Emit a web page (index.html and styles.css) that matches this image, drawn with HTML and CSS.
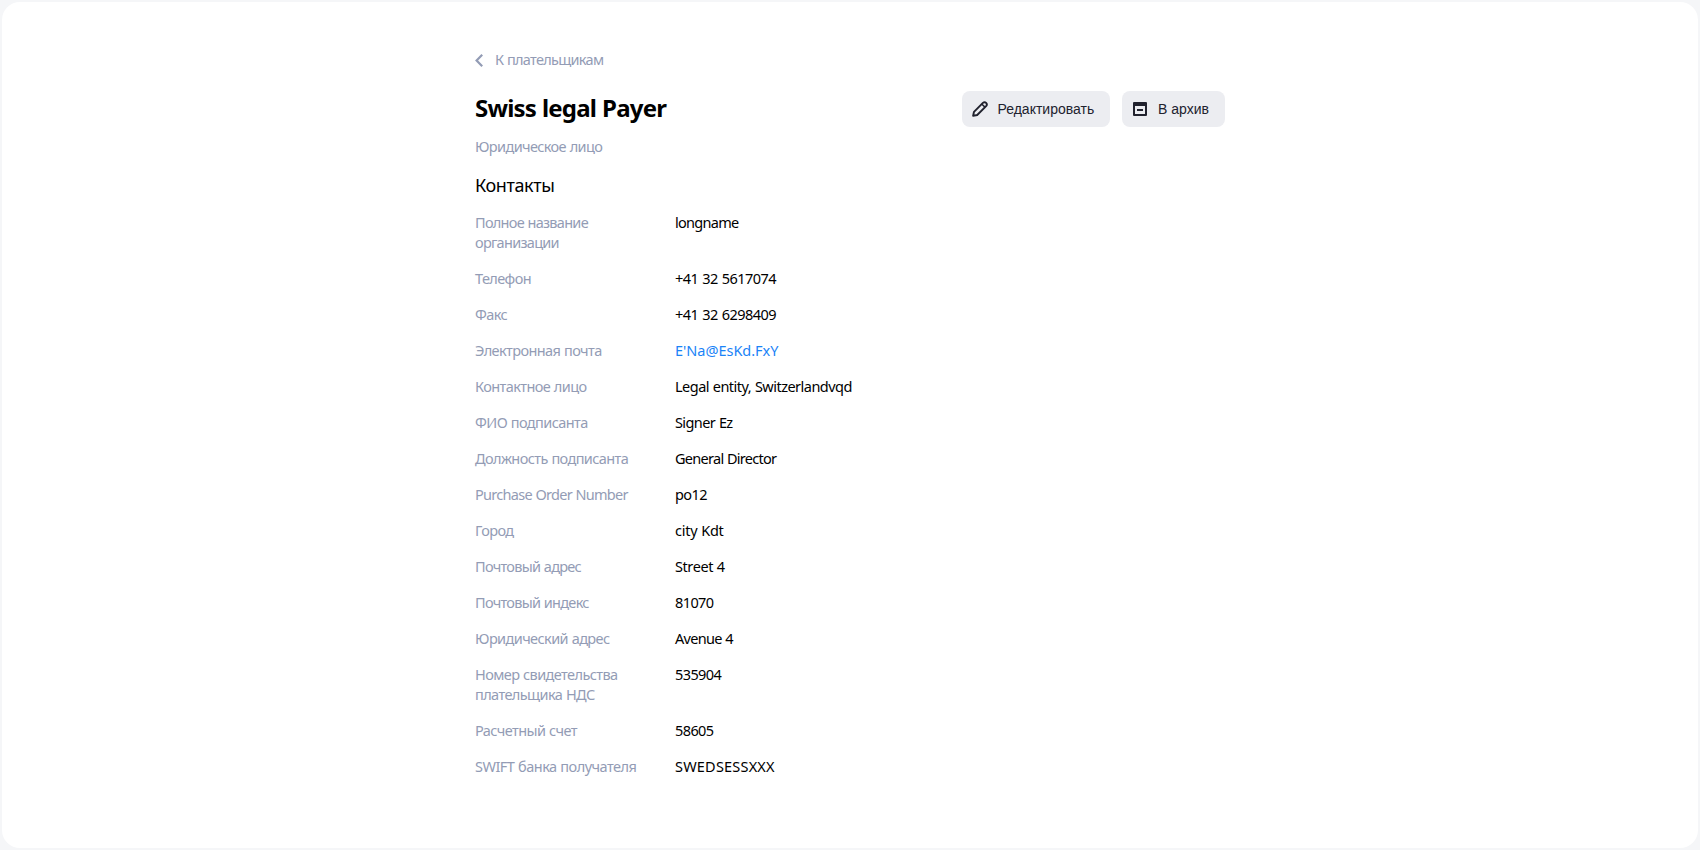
FILE: index.html
```html
<!DOCTYPE html>
<html lang="ru">
<head>
<meta charset="utf-8">
<title>Swiss legal Payer</title>
<link rel="stylesheet" href="styles.css">
</head>
<body>
<main class="panel">
  <div class="content">
    <a class="back" href="#">
      <svg class="back-icon" width="8" height="13" viewBox="0 0 8 13" fill="none" stroke="currentColor" stroke-width="2.2"><path d="M7.2 .8 1.6 6.5 7.2 12.2"/></svg>
      <span>К плательщикам</span>
    </a>
    <header class="header">
      <h1 class="title">Swiss legal Payer</h1>
      <div class="actions">
        <button class="button">
          <svg width="16" height="16" viewBox="0 0 16 16" fill="none" stroke="currentColor" stroke-width="1.9" stroke-linejoin="round"><path d="M1.1 14.9 2 10.8 10.9 1.9Q12.6.4 14.1 1.9Q15.6 3.4 14.1 5.1L5.2 14Z"/><path d="M10 3.2 12.8 6" stroke-width="1.6"/></svg>
          <span>Редактировать</span>
        </button>
        <button class="button button-archive">
          <svg width="14" height="14" viewBox="0 0 14 14" fill="currentColor"><path fill-rule="evenodd" d="M1 0H13Q14 0 14 1V13Q14 14 13 14H1Q0 14 0 13V1Q0 0 1 0ZM2 4V12H12V4Z"/><path d="M4 7H10V9H4Z"/></svg>
          <span>В архив</span>
        </button>
      </div>
    </header>
    <p class="type">Юридическое лицо</p>
    <h2 class="section">Контакты</h2>
    <dl class="details">
      <dt class="narrow">Полное название организации</dt><dd class="narrow">longname</dd>
      <dt>Телефон</dt><dd class="phone">+41 32 5617074</dd>
      <dt>Факс</dt><dd class="phone">+41 32 6298409</dd>
      <dt>Электронная почта</dt><dd><a class="mail" href="#">E'Na@EsKd.FxY</a></dd>
      <dt>Контактное лицо</dt><dd class="person">Legal entity, Switzerlandvqd</dd>
      <dt>ФИО подписанта</dt><dd>Signer Ez</dd>
      <dt>Должность подписанта</dt><dd class="narrow">General Director</dd>
      <dt class="narrow">Purchase Order Number</dt><dd>po12</dd>
      <dt>Город</dt><dd class="loose">city Kdt</dd>
      <dt class="narrow">Почтовый адрес</dt><dd class="street">Street 4</dd>
      <dt class="narrow">Почтовый индекс</dt><dd>81070</dd>
      <dt>Юридический адрес</dt><dd class="narrow">Avenue 4</dd>
      <dt>Номер свидетельства плательщика НДС</dt><dd>535904</dd>
      <dt>Расчетный счет</dt><dd>58605</dd>
      <dt class="person">SWIFT банка получателя</dt><dd class="code">SWEDSESSXXX</dd>
    </dl>
  </div>
</main>
</body>
</html>
```
FILE: styles.css
```css
* { box-sizing: border-box; }
body {
  margin: 0;
  padding: 2px;
  height: 850px;
  background: #f5f6f8;
  color: #000;
  font: 14.5px/20px "Noto Sans", sans-serif;
  letter-spacing: -0.59px;
  word-spacing: 0.5px;
}
.panel {
  height: 846px;
  padding-top: 47px;
  border-radius: 18px;
  background: #fff;
}
.content { width: 750px; margin: 0 auto; }
.back {
  display: flex;
  align-items: center;
  gap: 12px;
  width: max-content;
  height: 20px;
  color: #939cb5;
  text-decoration: none;
  letter-spacing: -0.7px;
}
.back-icon { margin-top: 2px; }
.header {
  display: flex;
  align-items: center;
  justify-content: space-between;
  height: 36px;
  margin-top: 22px;
}
.title {
  margin: 0 0 2px;
  font-size: 24px;
  line-height: 28px;
  font-weight: 700;
  letter-spacing: -0.8px;
}
.actions { display: flex; gap: 12px; }
.button {
  display: flex;
  align-items: center;
  gap: 9.5px;
  height: 36px;
  width: 148px;
  padding: 0 0 0 10px;
  border: 0;
  border-radius: 8px;
  background: #ecedf1;
  color: #21222e;
  font: 14px/20px "Liberation Sans", sans-serif;
  letter-spacing: 0;
  word-spacing: 0;
}
.button-archive { width: 103px; padding-left: 11px; gap: 11px; }
.type { margin: 9px 0 0; color: #939cb5; letter-spacing: -0.62px; }
.section {
  margin: 17px 0 0;
  font-size: 18px;
  line-height: 24px;
  font-weight: 400;
  letter-spacing: -0.4px;
}
.details {
  display: grid;
  grid-template-columns: 170px 1fr;
  column-gap: 30px;
  row-gap: 16px;
  margin: 15px 0 0;
}
dt { color: #939cb5; }
dd { margin: 0; }
.mail { color: #1a83f7; text-decoration: none; letter-spacing: -0.02px; }
.narrow { letter-spacing: -0.72px; }
.phone { letter-spacing: -0.55px; word-spacing: 0.8px; }
.person { letter-spacing: -0.52px; }
.street { letter-spacing: -0.42px; }
.loose { letter-spacing: -0.27px; }
.code { letter-spacing: 0.2px; }
```
